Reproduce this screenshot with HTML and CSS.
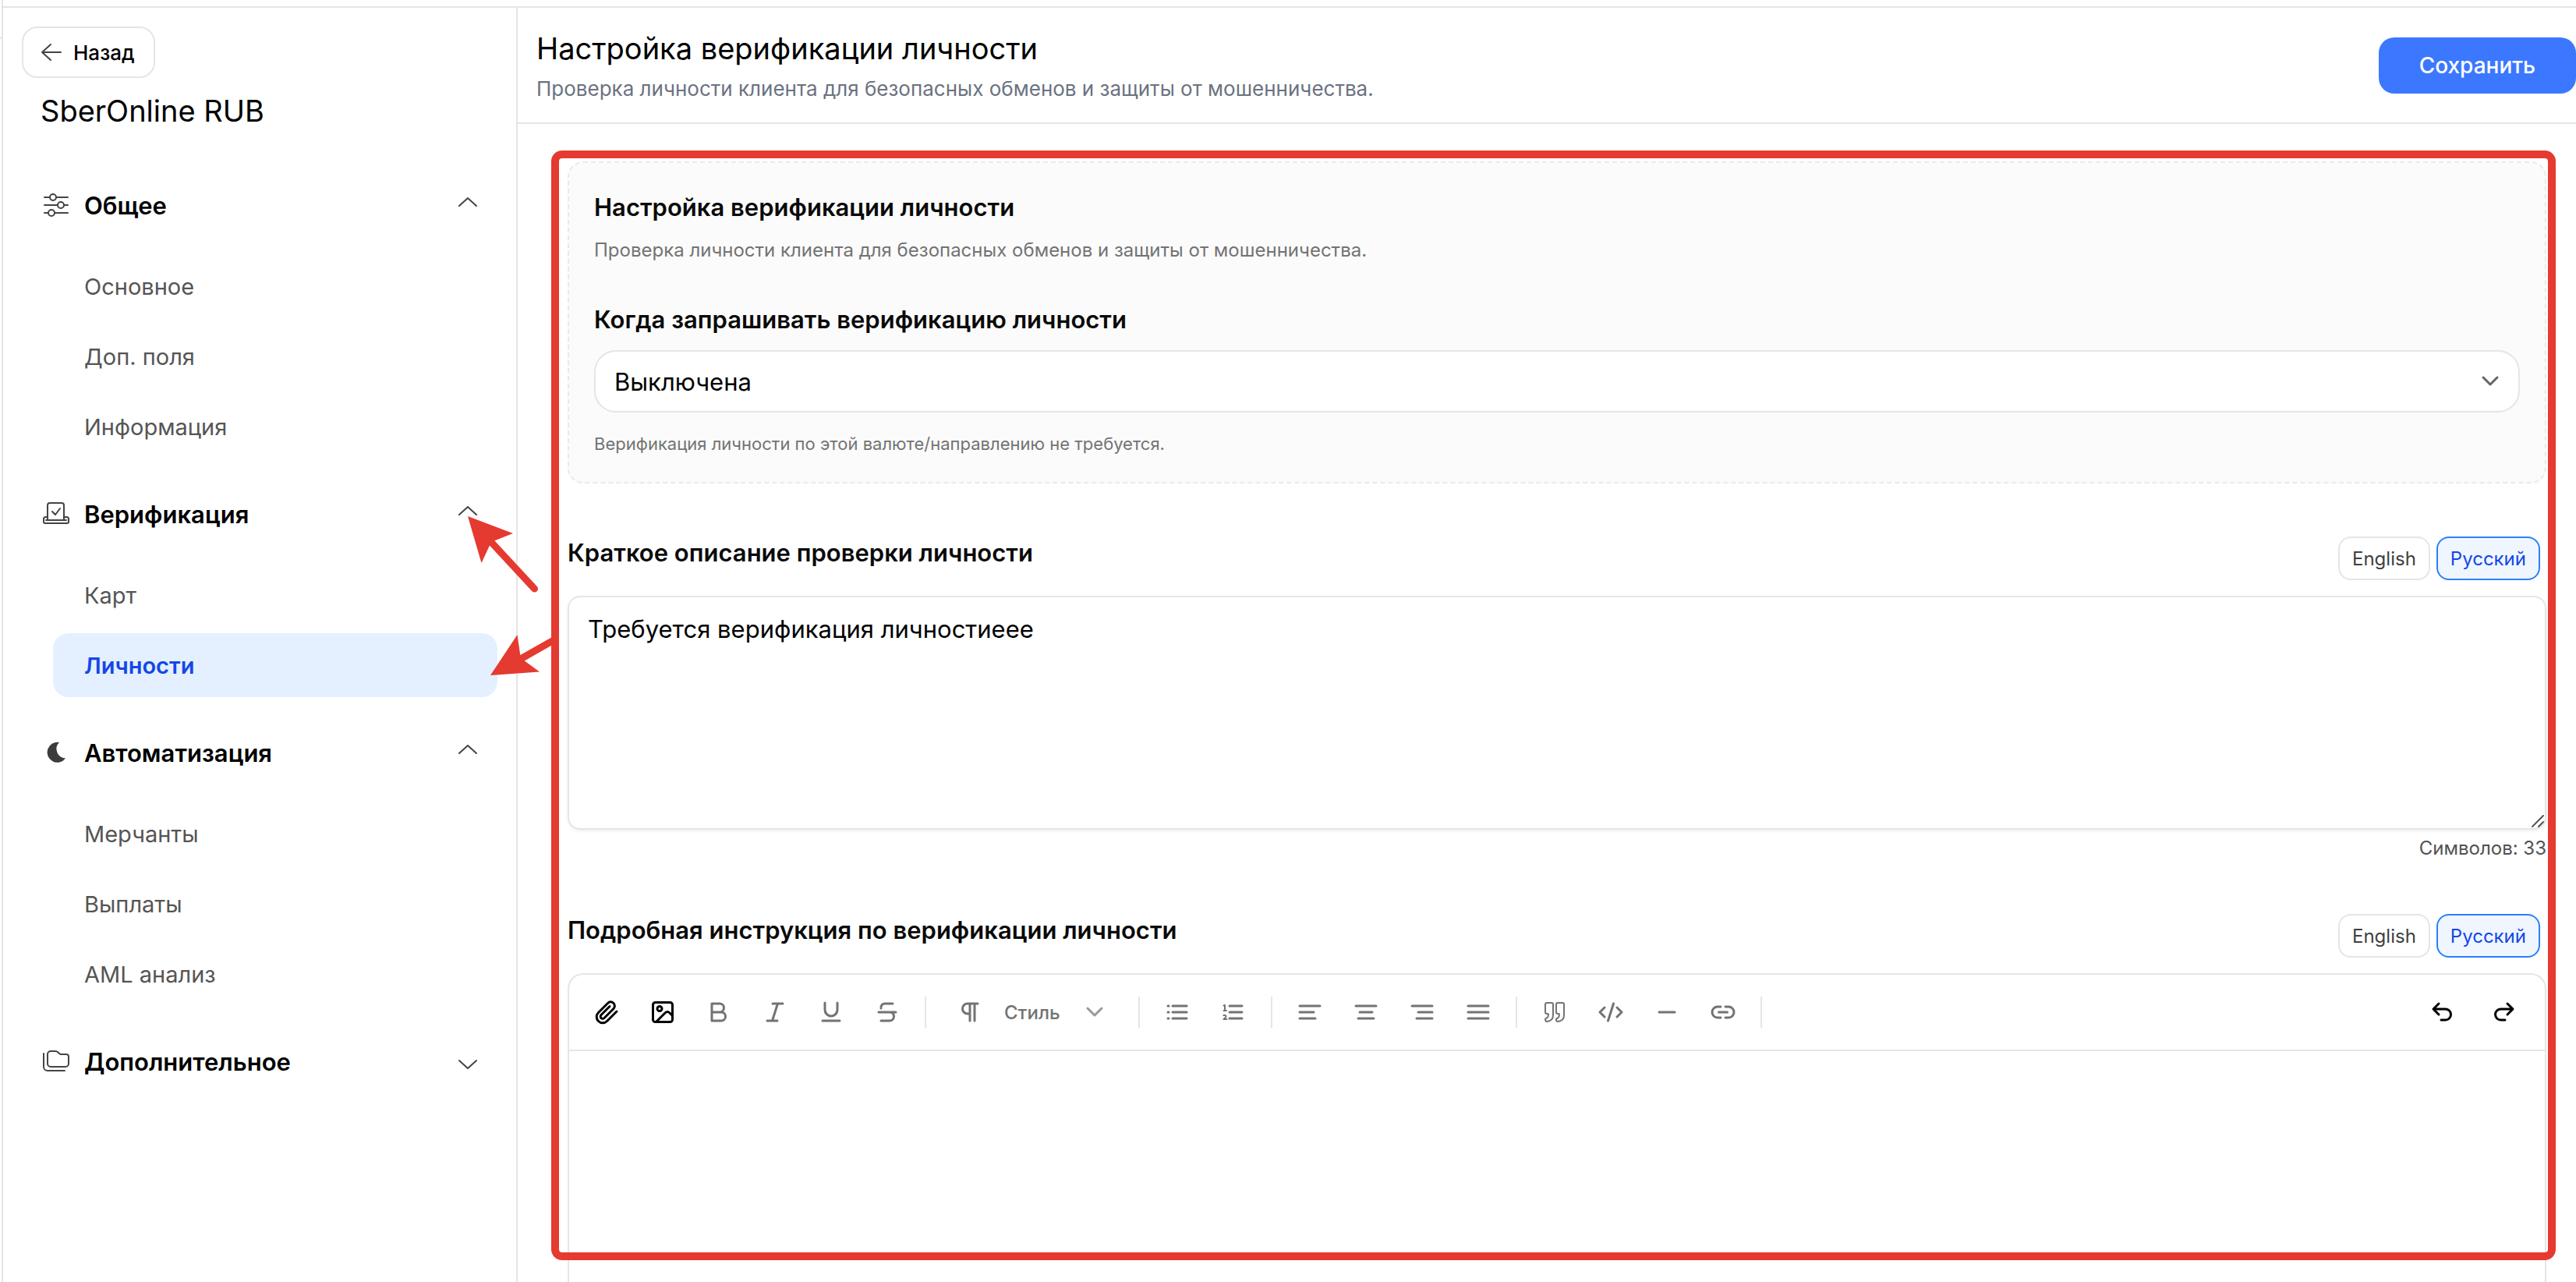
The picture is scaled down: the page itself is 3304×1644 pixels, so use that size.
FILE: index.html
```html
<!DOCTYPE html>
<html lang="ru">
<head>
    <meta charset="UTF-8">
    <meta name="viewport" content="width=device-width, initial-scale=1.0">
    <title>Настройка верификации личности - SberOnline RUB</title>
    <link rel="stylesheet" href="styles.css">
</head>
<body>
    <div class="layout">
        <!-- Edge of the collapsed main menu -->
        <div class="rail"><div class="rail-head"></div></div>
        <div class="workspace">
            <!-- Sidebar -->
            <aside class="sidebar">
                <button type="button" class="back-btn">
                    <svg width="28" height="28" viewBox="0 0 28 28"><path d="M13 4L2 14l11 10M2 14h24"/></svg>
                    Назад
                </button>
                <h2 class="sidebar-title">SberOnline RUB</h2>
                <nav class="menu">
                    <section class="menu-group">
                        <button type="button" class="menu-header">
                            <svg class="menu-icon" viewBox="0 0 36 36"><path d="M3 8h7M18 8h15M3 18h17M28 18h5M3 28h5M16 28h17"/><circle cx="14" cy="8" r="4"/><circle cx="24" cy="18" r="4"/><circle cx="12" cy="28" r="4"/></svg>
                            <span>Общее</span>
                            <svg class="chevron" viewBox="0 0 28 28"><path d="M3 15L14 5l11 10"/></svg>
                        </button>
                        <div class="menu-list">
                            <a href="#">Основное</a>
                            <a href="#">Доп. поля</a>
                            <a href="#">Информация</a>
                        </div>
                    </section>
                    <section class="menu-group">
                        <button type="button" class="menu-header">
                            <svg class="menu-icon" viewBox="0 0 36 36"><path d="M7 26V7a3 3 0 0 1 3-3h15a3 3 0 0 1 3 3v19M13 15l4 4 6-8M6 22H4.500a2.500 2.500 0 0 0-2.500 2.500V28a2 2 0 0 0 2 2h28a2 2 0 0 0 2-2v-3.500a2.500 2.500 0 0 0-2.500-2.500H29M5 26h26"/></svg>
                            <span>Верификация</span>
                            <svg class="chevron" viewBox="0 0 28 28"><path d="M3 15L14 5l11 10"/></svg>
                        </button>
                        <div class="menu-list">
                            <a href="#">Карт</a>
                            <a href="#" class="active">Личности</a>
                        </div>
                    </section>
                    <section class="menu-group">
                        <button type="button" class="menu-header">
                            <svg class="menu-icon" viewBox="0 0 36 36"><path class="filled" d="M22 5A13 13 0 1 0 30 25.500A12 12 0 0 1 22 5z"/></svg>
                            <span>Автоматизация</span>
                            <svg class="chevron" viewBox="0 0 28 28"><path d="M3 15L14 5l11 10"/></svg>
                        </button>
                        <div class="menu-list">
                            <a href="#">Мерчанты</a>
                            <a href="#">Выплаты</a>
                            <a href="#">AML анализ</a>
                        </div>
                    </section>
                    <section class="menu-group">
                        <button type="button" class="menu-header">
                            <svg class="menu-icon" viewBox="0 0 36 36"><path d="M2 8v17a5 5 0 0 0 5 5h22M7 9a4 4 0 0 1 4-4h6c1.500 0 2.500.5 3.500 1.500L22 8q1 1 2.500 1H31a3 3 0 0 1 3 3v9a4 4 0 0 1-4 4H11a4 4 0 0 1-4-4z"/></svg>
                            <span>Дополнительное</span>
                            <svg class="chevron" viewBox="0 0 28 28"><path d="M3 13l11 10 11-10"/></svg>
                        </button>
                    </section>
                </nav>
            </aside>

            <!-- Page -->
            <main class="page">
                <header class="page-header">
                    <div>
                        <h1>Настройка верификации личности</h1>
                        <p>Проверка личности клиента для безопасных обменов и защиты от мошенничества.</p>
                    </div>
                    <button type="button" class="save-btn">Сохранить</button>
                </header>

                <div class="content">
                    <section class="card">
                        <h3>Настройка верификации личности</h3>
                        <p class="card-text">Проверка личности клиента для безопасных обменов и защиты от мошенничества.</p>
                        <label for="verify-mode" class="field-label">Когда запрашивать верификацию личности</label>
                        <div class="select-wrap">
                            <select id="verify-mode">
                                <option>Выключена</option>
                            </select>
                            <svg width="24" height="24" viewBox="0 0 24 24"><path d="M3 7l9 9 9-9"/></svg>
                        </div>
                        <p class="hint">Верификация личности по этой валюте/направлению не требуется.</p>
                    </section>

                    <section class="field">
                        <div class="field-head">
                            <label for="short-text" class="field-label">Краткое описание проверки личности</label>
                            <div class="langs">
                                <button type="button">English</button>
                                <button type="button" class="active">Русский</button>
                            </div>
                        </div>
                        <div class="textarea-wrap">
                            <textarea id="short-text">Требуется верификация личностиеее</textarea>
                            <svg width="16" height="16" viewBox="0 0 16 16"><path d="M1 15L15 1M9 15l6-6"/></svg>
                        </div>
                        <div class="counter">Символов: 33</div>
                    </section>

                    <section class="field field-editor">
                        <div class="field-head">
                            <span class="field-label">Подробная инструкция по верификации личности</span>
                            <div class="langs">
                                <button type="button">English</button>
                                <button type="button" class="active">Русский</button>
                            </div>
                        </div>
                        <div class="editor">
                            <div class="toolbar">
                                <button type="button" class="tool dark" aria-label="Файл"><svg viewBox="0 0 32 32"><path d="M29 15L16.500 27.500a7.500 7.500 0 0 1-11-11L17.500 4.500a5 5 0 0 1 7.500 7L13 23.500a2.800 2.800 0 0 1-4-4L20 8.500"/></svg></button>
                                <button type="button" class="tool dark" aria-label="Изображение"><svg viewBox="0 0 32 32"><rect x="3.500" y="3.500" width="25" height="25" rx="3"/><circle cx="12" cy="11.500" r="3"/><path d="M8 28l11-11q3-3 6 0l3.500 3.500"/></svg></button>
                                <button type="button" class="tool" aria-label="Жирный"><svg viewBox="0 0 32 32"><path d="M7 5h10a5.500 5.500 0 0 1 0 11H7zM7 16h12a5.500 5.500 0 0 1 0 11H7z"/></svg></button>
                                <button type="button" class="tool" aria-label="Курсив"><svg viewBox="0 0 32 32"><path d="M13 5h13M6 27h13M19.500 5l-7 22"/></svg></button>
                                <button type="button" class="tool" aria-label="Подчёркнутый"><svg viewBox="0 0 32 32"><path d="M8 4v9a8 8 0 0 0 16 0V4M5 27h22"/></svg></button>
                                <button type="button" class="tool" aria-label="Зачёркнутый"><svg viewBox="0 0 32 32"><path d="M23 5H13a5 5 0 0 0-5 6M5 16h22M18 16h1a5.500 5.500 0 0 1 0 11H8"/></svg></button>
                                <i class="divider"></i>
                                <button type="button" class="style-btn">
                                    <svg viewBox="0 0 32 32"><path d="M26 5H13a6.500 6.500 0 0 0 0 13h3M16 5v22M22 5v22"/></svg>
                                    <span>Стиль</span>
                                    <svg class="style-arrow" viewBox="0 0 32 32"><path d="M7 11l9 9 9-9"/></svg>
                                </button>
                                <i class="divider"></i>
                                <button type="button" class="tool" aria-label="Список"><svg viewBox="0 0 32 32"><path d="M10 8h18M10 16h18M10 24h18M4 8h1M4 16h1M4 24h1"/></svg></button>
                                <button type="button" class="tool" aria-label="Нумерованный список"><svg viewBox="0 0 32 32"><path d="M11 8h16M11 16h16M11 24h16"/><path class="thin" d="M3.500 7.500L5 7v7M3.500 14h3.500M3.500 20a2 1.500 0 0 1 3 1.500q0 1-3 3.500H7.500"/></svg></button>
                                <i class="divider"></i>
                                <button type="button" class="tool" aria-label="По левому краю"><svg viewBox="0 0 32 32"><path d="M3 8h26M3 16h18M3 24h20"/></svg></button>
                                <button type="button" class="tool" aria-label="По центру"><svg viewBox="0 0 32 32"><path d="M3 8h26M8 16h16M6 24h20"/></svg></button>
                                <button type="button" class="tool" aria-label="По правому краю"><svg viewBox="0 0 32 32"><path d="M3 8h26M11 16h18M9 24h20"/></svg></button>
                                <button type="button" class="tool" aria-label="По ширине"><svg viewBox="0 0 32 32"><path d="M3 8h26M3 16h26M3 24h26"/></svg></button>
                                <i class="divider"></i>
                                <button type="button" class="tool" aria-label="Цитата"><svg viewBox="0 0 32 32"><path class="thin" d="M4 6a2 2 0 0 1 2-2h6a2 2 0 0 1 2 2v14q0 7-8 8-2 0-2-3 0-1 1-1 3-1 3-5 0-1-1-1H6a2 2 0 0 1-2-2zM18 6a2 2 0 0 1 2-2h6a2 2 0 0 1 2 2v14q0 7-8 8-2 0-2-3 0-1 1-1 3-1 3-5 0-1-1-1h-1a2 2 0 0 1-2-2z"/></svg></button>
                                <button type="button" class="tool" aria-label="Код"><svg viewBox="0 0 32 32"><path d="M8 10l-6 6 6 6M24 10l6 6-6 6M19.500 5l-7 22"/></svg></button>
                                <button type="button" class="tool" aria-label="Линия"><svg viewBox="0 0 32 32"><path d="M6 16h20"/></svg></button>
                                <button type="button" class="tool" aria-label="Ссылка"><svg viewBox="0 0 32 32"><path d="M13 9H9a7 7 0 0 0 0 14h4M19 9h4a7 7 0 0 1 0 14h-4M10.500 16h11"/></svg></button>
                                <i class="divider"></i>
                                <div class="history">
                                    <button type="button" class="tool dark" aria-label="Отменить"><svg viewBox="0 0 32 32"><path d="M12 5L5 12l7 7M5 12h15.500a7 7 0 0 1 0 14H15"/></svg></button>
                                    <button type="button" class="tool dark" aria-label="Повторить"><svg viewBox="0 0 32 32"><path d="M20 5l7 7-7 7M27 12H11.500a7 7 0 0 0 0 14H17"/></svg></button>
                                </div>
                            </div>
                            <div class="editor-body" contenteditable="true" aria-label="Подробная инструкция"></div>
                        </div>
                    </section>
                    <div class="highlight"></div>
                </div>
            </main>

            <!-- Pointer arrows -->
            <svg class="pointers" width="130" height="230" viewBox="580 650 130 230">
                <path d="M600 662l58 22-24 9.500-6 6-10.500 22.500z"/>
                <path class="shaft" d="M628 693l57.500 62"/>
                <path d="M629 866l34.500-52 4 27.500 4 5 20.500 15z"/>
                <path class="shaft" d="M666 846l46-26"/>
            </svg>
        </div>
    </div>
</body>
</html>
```

FILE: styles.css
```css
* {
    margin: 0;
    padding: 0;
    box-sizing: border-box;
}

body {
    font-family: Inter, 'Liberation Sans', sans-serif;
    background: #fff;
    color: #000;
    overflow: hidden;
}
button, select, textarea {
    font-family: inherit;
    color: inherit;
    background: none;
    border: none;
}
svg {
    fill: none;
    stroke: currentColor;
    stroke-width: 2;
    stroke-linecap: round;
    stroke-linejoin: round;
    flex-shrink: 0;
}
.layout {
    display: flex;
    height: 100vh;
}
.rail {
    width: 4px;
    border-right: 2px solid #e5e5e5;
}
.rail-head {
    height: 50px;
    border-bottom: 2px solid #e5e5e5;
}
.workspace {
    position: relative;
    flex: 1;
    display: flex;
    min-width: 0;
    margin-top: 8px;
    border-top: 2px solid #e5e5e5;
}

/* Sidebar */
.sidebar {
    width: 660px;
    flex-shrink: 0;
    padding: 24px 24px 0;
    border-right: 2px solid #e5e5e5;
}
.back-btn {
    display: flex;
    align-items: center;
    gap: 14px;
    height: 66px;
    padding: 0 24px 0 22px;
    border: 2px solid #e5e5e5;
    border-radius: 20px;
    font-size: 26px;
    font-weight: 500;
}
.back-btn svg {
    color: #444;
}
.sidebar-title {
    padding-left: 24px;
    margin: 18px 0 56px;
    font-size: 38px;
    line-height: 48px;
    font-weight: 400;
}
.menu-group {
    margin-bottom: 30px;
}
.menu-header {
    display: flex;
    align-items: center;
    width: 100%;
    height: 82px;
    padding: 0 24px 0 26px;
    font-size: 31px;
    font-weight: 600;
    text-align: left;
}
.menu-header span {
    flex: 1;
    margin-left: 18px;
}
.menu-icon {
    width: 36px;
    height: 36px;
    color: #444;
}
.menu-icon .filled {
    fill: #3c3c3c;
    stroke: none;
}
.chevron {
    width: 28px;
    height: 28px;
    color: #444;
}
.menu-list {
    display: flex;
    flex-direction: column;
    gap: 8px;
    margin: 22px 0 0 40px;
}
.menu-list a {
    height: 82px;
    line-height: 84px;
    padding-left: 40px;
    border-radius: 20px;
    color: #555;
    font-size: 29px;
    text-decoration: none;
}
.menu-list a.active {
    background: #e4f0ff;
    color: #1447e6;
    font-weight: 600;
}

/* Page */
.page {
    flex: 1;
    display: flex;
    flex-direction: column;
    min-width: 0;
}
.page-header {
    display: flex;
    justify-content: space-between;
    align-items: center;
    height: 149px;
    padding-left: 24px;
    border-bottom: 2px solid #e5e5e5;
}
.page-header h1 {
    font-size: 38px;
    line-height: 60px;
    font-weight: 400;
}
.page-header p {
    font-size: 26px;
    line-height: 44px;
    color: #6b7280;
}
.save-btn {
    height: 72px;
    padding: 0 52px;
    border-radius: 20px;
    background: #3b78ff;
    color: #fff;
    font-size: 28px;
    font-weight: 500;
}
.content {
    position: relative;
    flex: 1;
    display: flex;
    flex-direction: column;
    min-height: 0;
    padding: 48px 38px 0 64px;
}
.card {
    padding: 32px;
    border: 2px dashed #e9e9e9;
    border-radius: 20px;
    background: #fbfbfb;
}
.card h3,
.field-label {
    display: block;
    font-size: 31px;
    line-height: 50px;
    font-weight: 600;
    color: #0a0a0a;
}
.card-text {
    margin: 6px 0 40px;
    font-size: 24px;
    line-height: 48px;
    color: #737373;
}
.select-wrap {
    position: relative;
    margin: 14px 0 24px;
}
.select-wrap select {
    appearance: none;
    width: 100%;
    height: 80px;
    padding: 0 24px;
    border: 2px solid #e5e5e5;
    border-radius: 28px;
    background: #fff;
    font-size: 31px;
}
.select-wrap svg {
    position: absolute;
    right: 26px;
    top: 28px;
    color: #666;
    stroke-width: 3;
}
.hint {
    font-size: 22px;
    line-height: 33px;
    color: #737373;
}
.field {
    margin-top: 64px;
}
.field-head {
    display: flex;
    justify-content: space-between;
    height: 80px;
    padding-right: 8px;
}
.langs {
    display: flex;
    gap: 8px;
    padding-top: 4px;
}
.langs button {
    height: 56px;
    padding: 0 16px;
    border: 2px solid #e5e5e5;
    border-radius: 16px;
    color: #404040;
    font-size: 24px;
    font-weight: 400;
}
.langs button.active {
    border-color: #2b7fff;
    background: #eff6ff;
    color: #1447e6;
}
.textarea-wrap {
    position: relative;
}
.textarea-wrap textarea {
    display: block;
    width: 100%;
    height: 300px;
    padding: 16px 24px;
    border: 2px solid #e5e5e5;
    border-radius: 16px;
    box-shadow: 0 2px 4px rgba(0, 0, 0, 0.06);
    font-size: 31px;
    line-height: 50px;
    resize: none;
}
/* resize grip */
.textarea-wrap svg {
    position: absolute;
    right: 3px;
    bottom: 3px;
    color: #555;
    stroke-width: 2;
}
.counter {
    margin-top: 8px;
    font-size: 24px;
    line-height: 32px;
    color: #525252;
    text-align: right;
}

/* Rich text editor */
.field-editor {
    flex: 1;
    display: flex;
    flex-direction: column;
    min-height: 0;
}
.editor {
    flex: 1;
    border: 2px solid #e5e5e5;
    border-bottom: none;
    border-radius: 20px 20px 0 0;
}
.toolbar {
    display: flex;
    align-items: center;
    height: 98px;
    padding: 0 12px;
    border-bottom: 2px solid #e5e5e5;
    color: #737373;
}
.toolbar svg {
    width: 32px;
    height: 32px;
    stroke-width: 3;
}
.toolbar svg .thin {
    stroke-width: 2;
}
.tool {
    display: flex;
    align-items: center;
    justify-content: center;
    width: 72px;
    height: 72px;
}
.tool.dark {
    color: #000;
}
.divider {
    width: 2px;
    height: 40px;
    margin: 0 12px;
    background: #e5e5e5;
}
.style-btn {
    display: flex;
    align-items: center;
    width: 248px;
    height: 72px;
    padding: 0 28px;
    font-size: 24px;
    font-weight: 500;
}
.style-btn span {
    flex: 1;
    margin-left: 28px;
    text-align: left;
}
.style-arrow {
    color: #999;
}
.history {
    display: flex;
    margin-left: auto;
}
.history .tool {
    width: 80px;
}
.editor-body {
    min-height: 280px;
    outline: none;
}

/* Annotations over the page */
.highlight {
    position: absolute;
    top: 34px;
    right: 26px;
    bottom: 28px;
    left: 43px;
    border: 10px solid #e53a30;
    border-radius: 14px;
    pointer-events: none;
}
.pointers {
    position: absolute;
    top: 640px;
    left: 576px;
    fill: #e53a30;
    stroke: none;
}
.pointers .shaft {
    stroke: #e53a30;
    stroke-width: 9;
}
```
